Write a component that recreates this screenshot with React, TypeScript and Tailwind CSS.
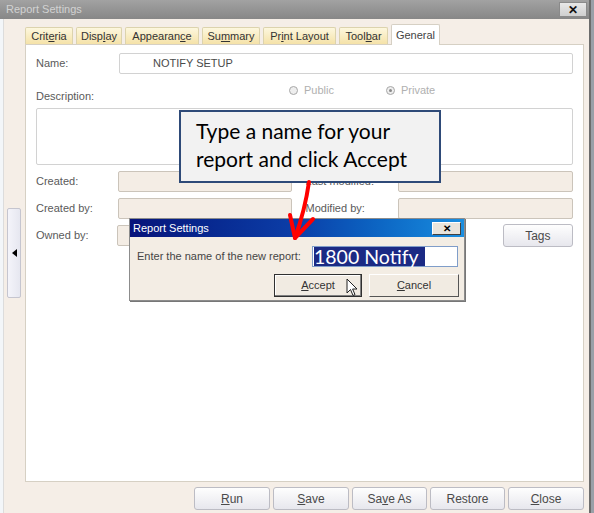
import React from "react";

const ui = { fontFamily: '"Liberation Sans", Arial, sans-serif' };
const office = { fontFamily: 'Lato, "Open Sans", sans-serif' };

function U({ children }: { children: React.ReactNode }) {
  return <span className="underline underline-offset-[1px]">{children}</span>;
}

const tabs: { label: React.ReactNode; w: string }[] = [
  { label: <>Crit<U>e</U>ria</>, w: "w-[48px]" },
  { label: <>Disp<U>l</U>ay</>, w: "w-[46px]" },
  { label: <>Appearan<U>c</U>e</>, w: "w-[74px]" },
  { label: <>Su<U>m</U>mary</>, w: "w-[58px]" },
  { label: <>Pr<U>i</U>nt Layout</>, w: "w-[73px]" },
  { label: <>Tool<U>b</U>ar</>, w: "w-[49px]" },
];

function Field({ className = "" }: { className?: string }) {
  return <div className={`h-[21px] rounded-[2px] border border-[#cbc4ba] bg-[#f4ede5] ${className}`} />;
}

function Label({ children, className = "" }: { children: React.ReactNode; className?: string }) {
  return <div className={`text-[11px] text-[#5a5a5a] ${className}`}>{children}</div>;
}

function PlainButton({ children, className = "" }: { children: React.ReactNode; className?: string }) {
  return (
    <div
      className={`flex h-[23px] items-center justify-center rounded-[3px] border border-[#bcbcc4] bg-gradient-to-b from-[#fefefe] to-[#e7e7ed] text-[12px] text-[#4a4a4a] ${className}`}
    >
      {children}
    </div>
  );
}

function Radio({ checked }: { checked?: boolean }) {
  return (
    <span className="relative inline-block h-[9px] w-[9px] rounded-full border border-[#a8a8a8] bg-[#eeeeee]">
      {checked && <span className="absolute left-[2px] top-[2px] h-[3px] w-[3px] rounded-full bg-[#8a8a8a]" />}
    </span>
  );
}

export default function App() {
  return (
    <div className="relative flex h-[513px] w-[594px] overflow-hidden bg-[#f5eee7]" style={ui}>
      <div className="flex flex-1 flex-col">
        {/* window title */}
        <div className="flex h-[19px] items-center justify-between bg-gradient-to-b from-[#a2a2a2] to-[#878787] pl-[6px] pr-[2px]">
          <span className="text-[11px] text-[#d2d2d2]">Report Settings</span>
          <div className="flex h-[15px] w-[28px] items-center justify-center border border-[#8a8a8a] bg-gradient-to-b from-[#e8e8e8] to-[#cfcfcf] text-[12px] font-bold text-[#111]">
            ✕
          </div>
        </div>

        <div className="flex flex-1">
          <div className="w-[4px] border-r border-[#dcdcdc] bg-[#f3f6f9]" />

          <div className="flex flex-1 flex-col">
            <div className="flex flex-1">
              {/* collapse strip */}
              <div className="w-[21px] pl-[3px] pt-[189px]">
                <div className="flex h-[90px] w-[14px] items-center justify-center rounded-[2px] border border-[#c5c5cf] bg-gradient-to-r from-[#f4f4fa] to-[#e6e7f0]">
                  <span className="h-0 w-0 border-y-[4px] border-r-[5px] border-y-transparent border-r-black" />
                </div>
              </div>

              <div className="flex w-[559px] flex-col">
                {/* tabs */}
                <div className="flex h-[25px] items-end gap-[3px]">
                  {tabs.map((t, i) => (
                    <div
                      key={i}
                      className={`flex h-[17px] items-center justify-center rounded-t-[2px] border border-b-0 border-[#dcd3ad] bg-gradient-to-b from-[#fdf7de] to-[#f5e2a8] text-[11px] text-[#333] ${t.w}`}
                    >
                      {t.label}
                    </div>
                  ))}
                  <div className="relative z-10 -mb-px flex h-[21px] w-[49px] items-center justify-center rounded-t-[2px] border border-b-0 border-[#d6d0c4] bg-white text-[11px] text-[#444]">
                    General
                  </div>
                </div>

                {/* panel */}
                <div className="flex h-[438px] flex-col border border-[#d6d0c4] bg-white px-[10px]">
                  <div className="mt-[8px] flex h-[21px] items-center">
                    <Label className="w-[83px]">Name:</Label>
                    <div className="flex h-[21px] flex-1 items-center rounded-[2px] border border-[#d2d2d2] pl-[33px] text-[11px] text-[#4a4a4a]">
                      NOTIFY SETUP
                    </div>
                  </div>

                  <div className="flex h-[34px]">
                    <Label className="w-[253px] self-end pb-[4px]">Description:</Label>
                    <div className="mt-[10px] flex h-[12px] items-center text-[11px] text-[#b0b0b0]">
                      <div className="flex w-[97px] items-center gap-[6px]">
                        <Radio />
                        <span>Public</span>
                      </div>
                      <div className="flex items-center gap-[6px]">
                        <Radio checked />
                        <span>Private</span>
                      </div>
                    </div>
                  </div>

                  <div className="h-[57px] rounded-[2px] border border-[#d2d2d2]" />

                  <div className="mt-[6px] flex h-[21px] items-center">
                    <Label className="w-[82px]">Created:</Label>
                    <Field className="w-[175px]" />
                    <Label className="ml-[14px] w-[93px]">Last modified:</Label>
                    <Field className="w-[176px]" />
                  </div>
                  <div className="mt-[6px] flex h-[21px] items-center">
                    <Label className="w-[82px]">Created by:</Label>
                    <Field className="w-[175px]" />
                    <Label className="ml-[14px] w-[93px]">Modified by:</Label>
                    <Field className="w-[176px]" />
                  </div>
                  <div className="mt-[6px] flex h-[21px] items-center">
                    <Label className="w-[82px]">Owned by:</Label>
                    <Field className="w-[175px]" />
                    <PlainButton className="ml-[212px] h-[21px] w-[71px]">Tags</PlainButton>
                  </div>
                </div>
              </div>
            </div>

            {/* bottom buttons */}
            <div className="flex h-[31px] justify-end gap-[3px] pr-[5px] pt-[5px]">
              <PlainButton className="w-[76px]"><U>R</U>un</PlainButton>
              <PlainButton className="w-[76px]"><U>S</U>ave</PlainButton>
              <PlainButton className="w-[75px]">Sa<U>v</U>e As</PlainButton>
              <PlainButton className="w-[75px]">Restore</PlainButton>
              <PlainButton className="w-[76px]"><U>C</U>lose</PlainButton>
            </div>
          </div>
        </div>
      </div>
      <div className="w-[5px] border-l-2 border-[#6c6c6c] bg-[#9aa0a8]" />

      {/* callout */}
      <div
        className="absolute left-[179px] top-[110px] h-[73px] w-[262px] border-2 border-[#2e4a78] bg-[#f2f2f2] pl-[15px] pt-[5px] text-[21px] leading-[28px] text-black"
        style={office}
      >
        Type a name for your
        <br />
        report and click Accept
      </div>

      {/* prompt dialog */}
      <div className="absolute left-[129px] top-[218px] flex h-[83px] w-[336px] flex-col border border-[#8c8c8c] bg-[#f3ede4] shadow-[1px_1px_0_#777]">
        <div className="flex h-[18px] items-center justify-between bg-gradient-to-r from-[#07137a] via-[#0c3ea8] to-[#1a8ee0] pl-[3px] pr-[3px]">
          <span className="text-[11px] text-white">Report Settings</span>
          <div className="flex h-[13px] w-[29px] items-center justify-center border border-t-white border-l-white border-b-[#404040] border-r-[#404040] bg-[#e9e4dc] text-[10px] font-bold text-black">
            ✕
          </div>
        </div>
        <div className="mt-[9px] flex h-[21px] items-center pl-[7px]">
          <span className="w-[175px] text-[11px] text-[#454545]">Enter the name of the new report:</span>
          <div className="flex h-[21px] w-[146px] items-center border border-[#7f9dc9] bg-white pl-px">
            <span className="bg-[#1b2a84] pr-[6px] text-[19.5px] leading-[19px] text-white" style={office}>
              1800 Notify
            </span>
          </div>
        </div>
        <div className="mt-[7px] flex gap-[7px] pl-[144px]">
          <div className="flex h-[23px] w-[88px] items-center justify-center border border-[#303030] bg-[#f1ebe2] text-[11px] text-[#333] shadow-[inset_-1px_-1px_0_#808080,inset_1px_1px_0_#ffffff]">
            <U>A</U>ccept
          </div>
          <div className="flex h-[23px] w-[90px] items-center justify-center border border-t-white border-l-white border-b-[#555] border-r-[#555] bg-[#f1ebe2] text-[11px] text-[#333]">
            <U>C</U>ancel
          </div>
        </div>
      </div>

      {/* red arrow, drawn over the dialog */}
      <svg className="absolute left-[282px] top-[178px]" width="40" height="66" viewBox="0 0 40 66">
        <path d="M27 4 Q23 32 13 60" fill="none" stroke="#ff0000" strokeWidth="4" strokeLinecap="round" />
        <path d="M8 37 L13 60 L31 41" fill="none" stroke="#ff0000" strokeWidth="4" strokeLinecap="round" strokeLinejoin="round" />
      </svg>

      {/* mouse pointer */}
      <svg className="absolute left-[346px] top-[278px]" width="12" height="19" viewBox="0 0 12 19">
        <path d="M1 1 L1 15 L4.5 11.5 L7 17.5 L9 16.6 L6.6 11 L11 11 Z" fill="#fff" stroke="#222" strokeWidth="1" strokeLinejoin="round" />
      </svg>
    </div>
  );
}
